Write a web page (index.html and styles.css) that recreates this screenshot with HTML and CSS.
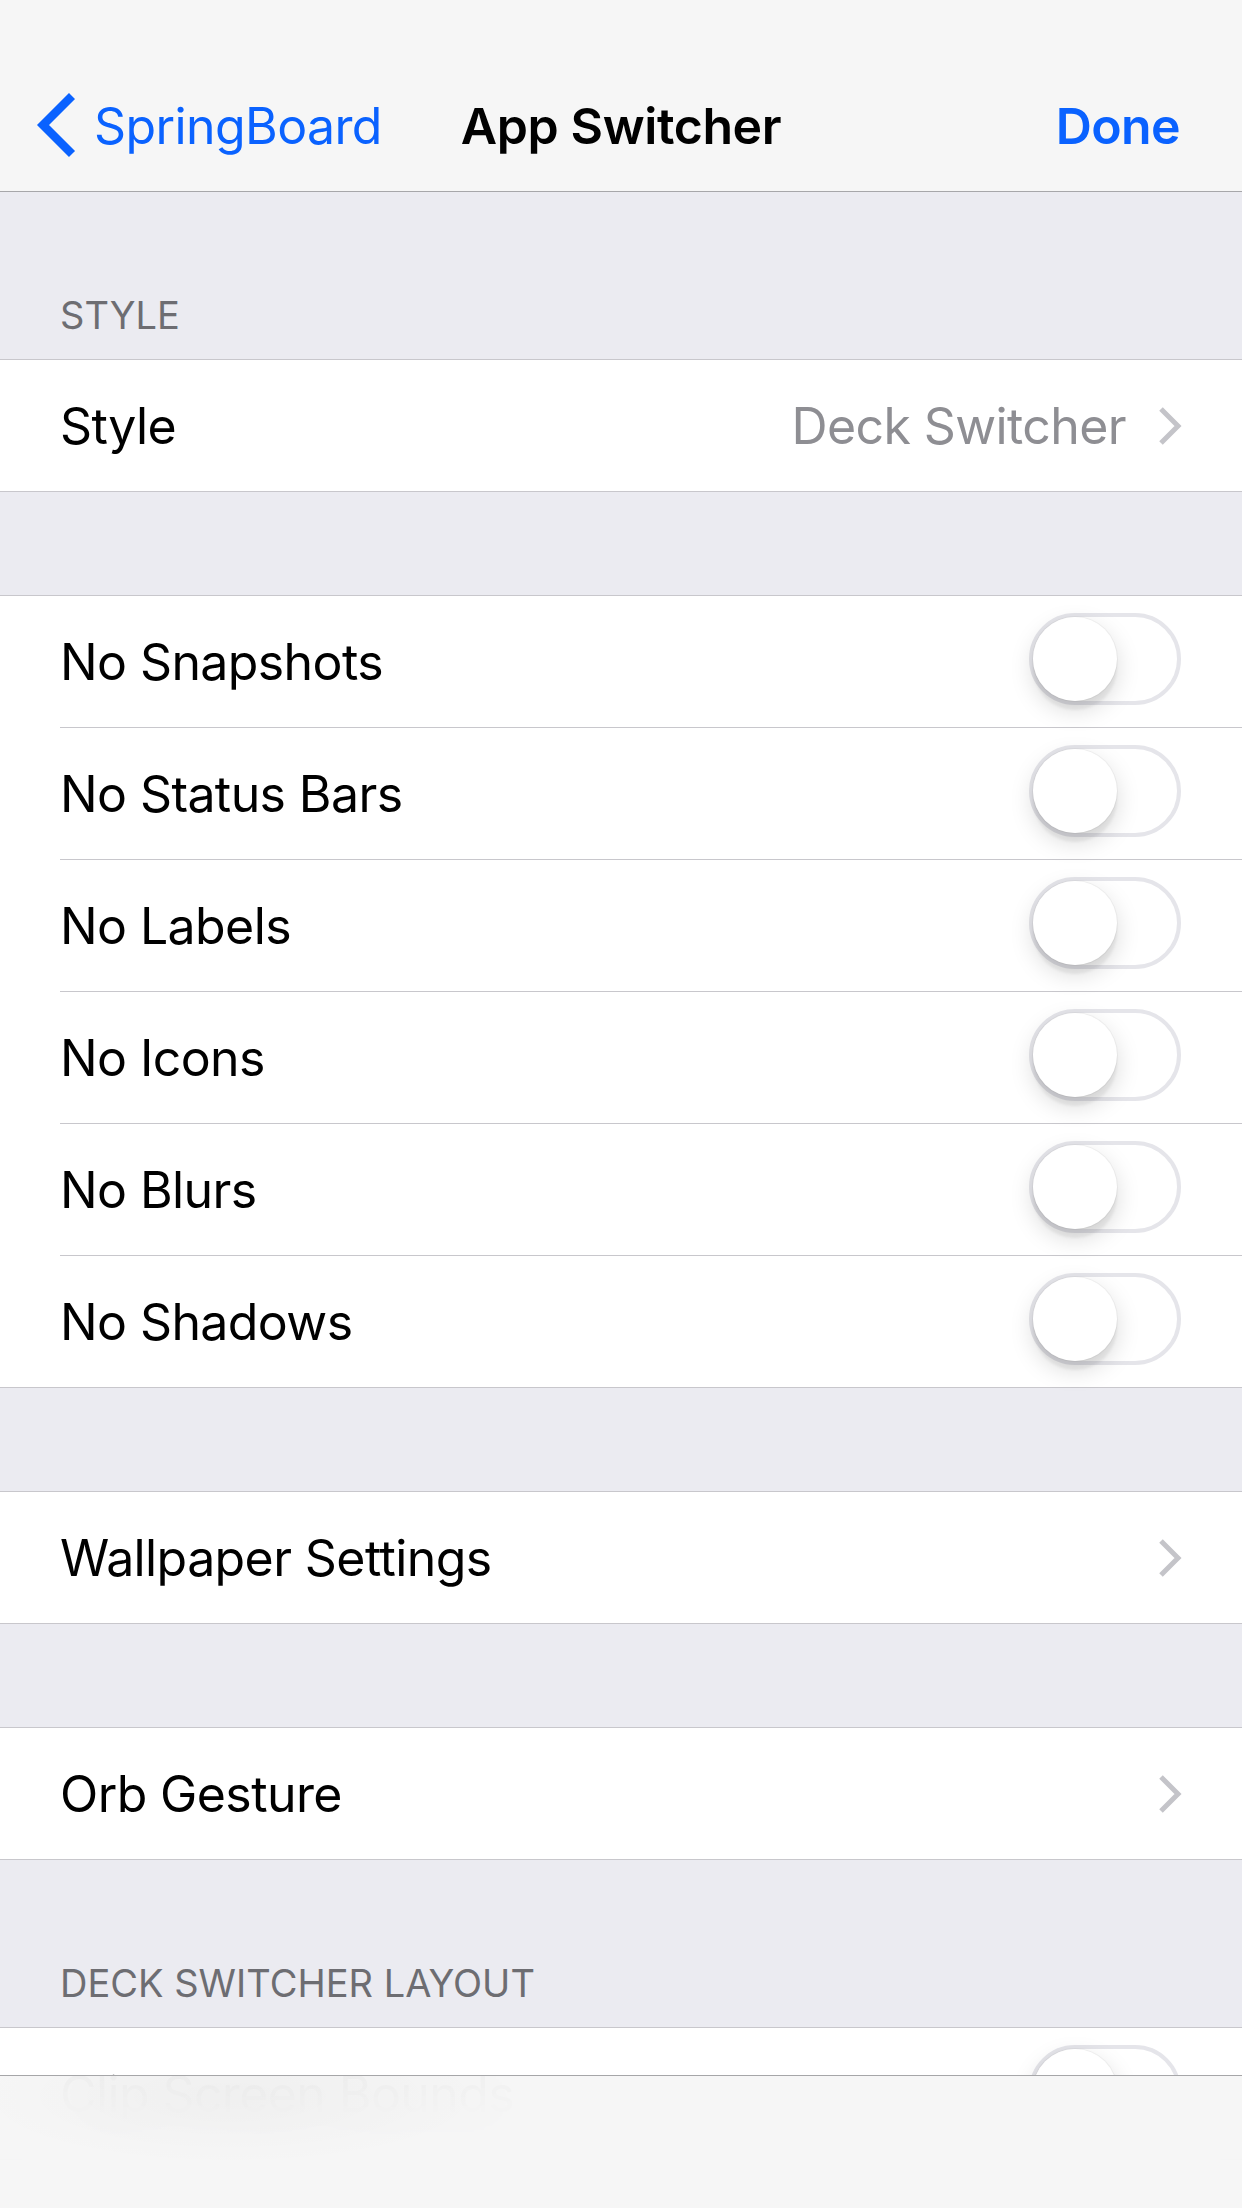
FILE: index.html
```html
<!DOCTYPE html>
<html lang="en">
<head>
<meta charset="utf-8">
<title>App Switcher</title>
<link rel="stylesheet" href="styles.css">
</head>
<body>
<div class="screen">
  <header class="topbar">
    <div class="statusbar"></div>
    <nav class="navbar">
      <a class="nav-back">
        <svg class="back-chevron" viewBox="0 0 40 64" width="40" height="64" aria-hidden="true">
          <polyline points="36,3 7,32 36,61" fill="none" stroke="#0a62ff" stroke-width="8.5" stroke-linejoin="miter" stroke-linecap="butt"/>
        </svg>
        <span>SpringBoard</span>
      </a>
      <h1 class="nav-title">App Switcher</h1>
      <a class="nav-done">Done</a>
    </nav>
  </header>

  <main class="content">
    <div class="section-header"><span>Style</span></div>
    <ul class="group">
      <li class="cell">
        <div class="cell-body">
          <span class="label">Style</span>
          <span class="detail">Deck Switcher</span>
          <svg class="chevron" viewBox="0 0 24 40" width="24" height="40" aria-hidden="true"><polyline points="3,3 20,20 3,37" fill="none" stroke="#c4c4c9" stroke-width="5"/></svg>
        </div>
      </li>
    </ul>

    <div class="gap"></div>
    <ul class="group">
      <li class="cell"><div class="cell-body"><span class="label">No Snapshots</span><span class="switch"><span class="knob"></span></span></div></li>
      <li class="cell"><div class="cell-body"><span class="label">No Status Bars</span><span class="switch"><span class="knob"></span></span></div></li>
      <li class="cell"><div class="cell-body"><span class="label">No Labels</span><span class="switch"><span class="knob"></span></span></div></li>
      <li class="cell"><div class="cell-body"><span class="label">No Icons</span><span class="switch"><span class="knob"></span></span></div></li>
      <li class="cell"><div class="cell-body"><span class="label">No Blurs</span><span class="switch"><span class="knob"></span></span></div></li>
      <li class="cell"><div class="cell-body"><span class="label">No Shadows</span><span class="switch"><span class="knob"></span></span></div></li>
    </ul>

    <div class="gap"></div>
    <ul class="group">
      <li class="cell">
        <div class="cell-body">
          <span class="label">Wallpaper Settings</span>
          <svg class="chevron" viewBox="0 0 24 40" width="24" height="40" aria-hidden="true"><polyline points="3,3 20,20 3,37" fill="none" stroke="#c4c4c9" stroke-width="5"/></svg>
        </div>
      </li>
    </ul>

    <div class="gap"></div>
    <ul class="group">
      <li class="cell">
        <div class="cell-body">
          <span class="label">Orb Gesture</span>
          <svg class="chevron" viewBox="0 0 24 40" width="24" height="40" aria-hidden="true"><polyline points="3,3 20,20 3,37" fill="none" stroke="#c4c4c9" stroke-width="5"/></svg>
        </div>
      </li>
    </ul>

    <div class="section-header"><span>Deck Switcher Layout</span></div>
    <ul class="group">
      <li class="cell"><div class="cell-body"><span class="label">Clip Screen Bounds</span><span class="switch"><span class="knob"></span></span></div></li>
    </ul>
  </main>

  <div class="toolbar"></div>
</div>
</body>
</html>
```

FILE: styles.css
```css
* {
  box-sizing: border-box;
}

html, body {
  margin: 0;
  padding: 0;
}

body {
  width: 1242px;
  height: 2208px;
  overflow: hidden;
  background: #ebebf1;
  font-family: "Inter", "Roboto", "Liberation Sans", sans-serif;
  -webkit-font-smoothing: antialiased;
}

.screen {
  position: relative;
  width: 1242px;
  height: 2208px;
  overflow: hidden;
  background: #ebebf1;
}

/* ---------- top bar ---------- */
.topbar {
  background: #f6f6f6;
  border-bottom: 1px solid #a7a7aa;
}

.statusbar {
  height: 60px;
}

.navbar {
  height: 131px;
  display: grid;
  grid-template-columns: 1fr auto 1fr;
  align-items: center;
  padding: 0 36px;
}

.nav-back {
  display: flex;
  align-items: center;
  gap: 18px;
  color: #0a62ff;
  font-size: 50px;
  font-weight: 400;
  letter-spacing: -0.6px;
  justify-self: start;
}

.back-chevron {
  display: block;
  margin-top: -2px;
}

.nav-title {
  margin: 0;
  font-size: 50px;
  font-weight: 600;
  color: #000;
  letter-spacing: -0.4px;
}

.nav-done {
  justify-self: end;
  margin-right: 26px;
  color: #0a62ff;
  font-size: 50px;
  font-weight: 600;
  letter-spacing: -0.6px;
}

/* ---------- grouped table ---------- */
.content {
  display: flex;
  flex-direction: column;
}

.section-header {
  height: 167px;
  display: flex;
  align-items: flex-end;
  padding: 0 62px 21px 60px;
  color: #6d6d72;
  font-size: 38px;
  line-height: 46px;
  text-transform: uppercase;
  letter-spacing: 0;
}

.gap {
  height: 103px;
}

.group {
  list-style: none;
  margin: 0;
  padding: 0;
  background: #fff;
  border-top: 1px solid #c8c7cc;
  border-bottom: 1px solid #c8c7cc;
}

.cell {
  padding-left: 60px;
  background: #fff;
}

.cell-body {
  height: 131px;
  display: flex;
  align-items: center;
  padding-right: 60px;
}

.cell + .cell .cell-body {
  height: 132px;
  border-top: 1px solid #c8c7cc;
}

.label {
  flex: 1;
  font-size: 50px;
  color: #000;
  letter-spacing: -0.6px;
  white-space: nowrap;
}

.detail {
  font-size: 50px;
  color: #8e8e93;
  letter-spacing: -0.6px;
  margin-right: 32px;
}

.chevron {
  display: block;
  flex: none;
}

/* ---------- switch ---------- */
.switch {
  flex: none;
  width: 152px;
  height: 92px;
  border: 4px solid #e5e5ea;
  border-radius: 46px;
  background: #fff;
  display: flex;
  align-items: center;
  margin-right: 1px;
  margin-bottom: 6px;
}

.knob {
  width: 84px;
  height: 84px;
  border-radius: 50%;
  background: #fff;
  box-shadow:
    0 0 0 1px rgba(0, 0, 0, 0.04),
    0 9px 24px rgba(0, 0, 0, 0.15),
    0 9px 3px rgba(0, 0, 0, 0.06);
}

/* ---------- bottom toolbar (overlay) ---------- */
.toolbar {
  position: absolute;
  left: 0;
  right: 0;
  bottom: 0;
  height: 133px;
  border-top: 1px solid #a6a6a8;
  background:
    radial-gradient(ellipse 260px 70px at 230px 20px, rgba(0, 0, 0, 0.025), rgba(0, 0, 0, 0) 100%),
    rgba(246, 246, 246, 0.96);
  -webkit-backdrop-filter: blur(30px);
  backdrop-filter: blur(30px);
}
```
